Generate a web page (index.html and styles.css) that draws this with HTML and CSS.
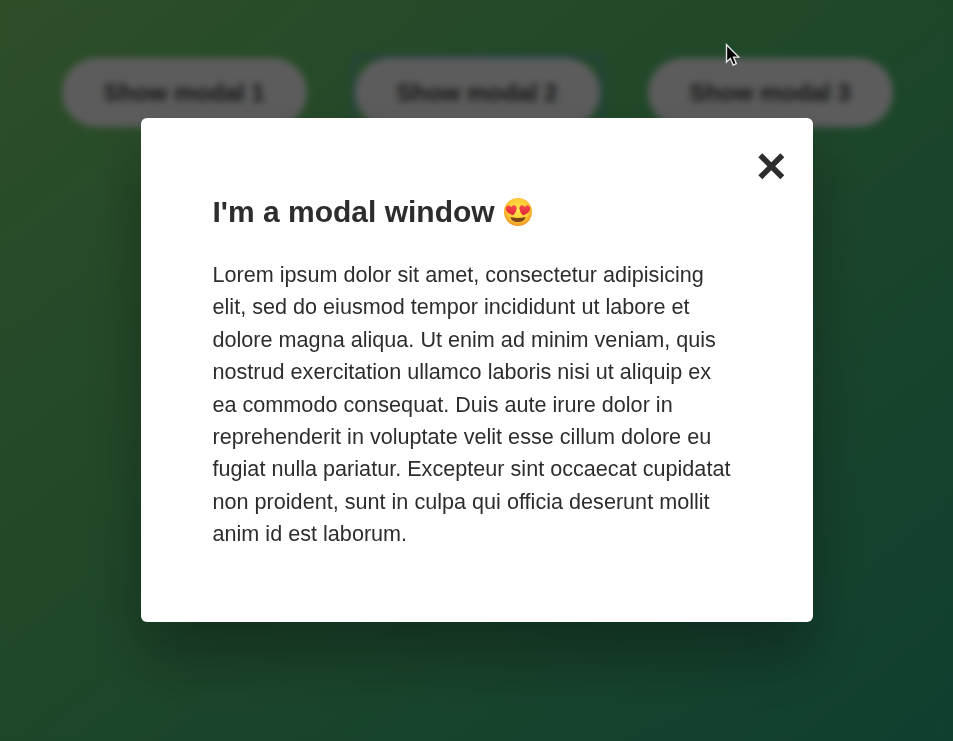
FILE: index.html
```
<!DOCTYPE html>
<html lang="en">
<head>
<meta charset="utf-8">
<title>Modal window</title>
<link rel="stylesheet" href="styles.css">
</head>
<body>
<main class="page">
  <button class="show-modal">Show modal 1</button>
  <button class="show-modal show-modal--focused">Show modal 2</button>
  <button class="show-modal">Show modal 3</button>
</main>
<div class="overlay">
  <section class="modal" role="dialog" aria-labelledby="modal-title">
    <button class="close-modal" aria-label="Close">
      <svg width="28" height="28" viewBox="0 0 28 28"><path d="M3.300 3.300 25.300 25.300M25.300 3.300 3.300 25.300" stroke="#2d2d2d" stroke-width="5.600" fill="none"/></svg>
    </button>
    <h1 class="modal-title" id="modal-title"><span>I'm a modal window</span>
      <svg class="emoji" width="30" height="30" viewBox="0 0 30 30">
        <defs>
          <radialGradient id="face" cx=".5" cy=".42" r=".58"><stop offset="0" stop-color="#ffe74a"/><stop offset=".65" stop-color="#fdcb35"/><stop offset="1" stop-color="#ee9425"/></radialGradient>
          <linearGradient id="heart" x1="0" y1="0" x2="0" y2="1"><stop offset="0" stop-color="#f8494a"/><stop offset="1" stop-color="#dc2638"/></linearGradient>
        </defs>
        <circle cx="15" cy="15" r="14" fill="url(#face)"/>
        <path d="M10.200 18.300C6.500 17.300 3 14.800 2.900 11.700C2.800 8.300 6.800 7.400 8.300 10.200C9.600 6.900 14 7.800 13.600 11.600C13.300 14.300 11.900 16.700 10.200 18.300Z" fill="url(#heart)"/>
        <path d="M19.800 18.300C23.500 17.300 27 14.800 27.100 11.700C27.200 8.300 23.200 7.400 21.700 10.200C20.400 6.900 16 7.800 16.400 11.600C16.700 14.300 18.100 16.700 19.800 18.300Z" fill="url(#heart)"/>
        <path d="M7.700 20Q15 22.200 22.300 20C22.300 26.700 7.700 26.700 7.700 20Z" fill="#7a4318"/>
      </svg>
    </h1>
    <p class="modal-text">Lorem ipsum dolor sit amet, consectetur adipisicing<br>elit, sed do eiusmod tempor incididunt ut labore et<br>dolore magna aliqua. Ut enim ad minim veniam, quis<br>nostrud exercitation ullamco laboris nisi ut aliquip ex<br>ea commodo consequat. Duis aute irure dolor in<br>reprehenderit in voluptate velit esse cillum dolore eu<br>fugiat nulla pariatur. Excepteur sint occaecat cupidatat<br>non proident, sunt in culpa qui officia deserunt mollit<br>anim id est laborum.</p>
  </section>
</div>
<svg class="cursor" width="16" height="24" viewBox="0 0 16 24"><path d="M1.500 1.700V19L5.300 15.400L8.200 22L11.300 20.700L8.500 14.100H13.700Z" fill="#000" stroke="#e4e4e4" stroke-width="1.400"/></svg>
</body>
</html>
```
FILE: styles.css
```
* {
  margin: 0;
  padding: 0;
  box-sizing: border-box;
}

body {
  height: 741px;
  overflow: hidden;
  font-family: "Liberation Sans", Arial, sans-serif;
  color: #2d2d2d;
  background: linear-gradient(to top left, #2a9e78, #4bb068 50%, #73c364);
}

.page {
  display: flex;
  justify-content: center;
  align-items: flex-start;
  gap: 48px;
  padding: 58px 0 0 1px;
}

.show-modal {
  width: 245px;
  height: 69px;
  border: none;
  border-radius: 35px;
  background: #e6e6e6;
  color: #3c3c3c;
  font: bold 24px "Liberation Sans", Arial, sans-serif;
}

.show-modal--focused {
  position: relative;
}

.show-modal--focused::before {
  content: "";
  position: absolute;
  inset: -3px;
  border: 3px solid rgba(95, 145, 215, 0.7);
  border-radius: 5px;
}

.overlay {
  position: absolute;
  inset: 0;
  display: flex;
  align-items: flex-start;
  justify-content: center;
  padding-top: 118px;
  background: rgba(0, 0, 0, 0.6);
  backdrop-filter: blur(3.6px);
}

.modal {
  position: relative;
  width: 672px;
  height: 504px;
  padding: 72px;
  border-radius: 6px;
  background: #fff;
  box-shadow: 0 36px 60px rgba(0, 0, 0, 0.3);
}

.close-modal {
  position: absolute;
  top: 34px;
  right: 28px;
  border: none;
  background: none;
  line-height: 0;
}

.modal-title {
  display: flex;
  align-items: center;
  gap: 8px;
  height: 44px;
  margin-bottom: 25px;
  font-size: 30px;
  line-height: 44px;
  white-space: nowrap;
}

.modal-text {
  font-size: 21.6px;
  line-height: 32.4px;
  letter-spacing: 0.01px;
  white-space: nowrap;
}

.cursor {
  position: absolute;
  left: 725px;
  top: 43px;
}
```
